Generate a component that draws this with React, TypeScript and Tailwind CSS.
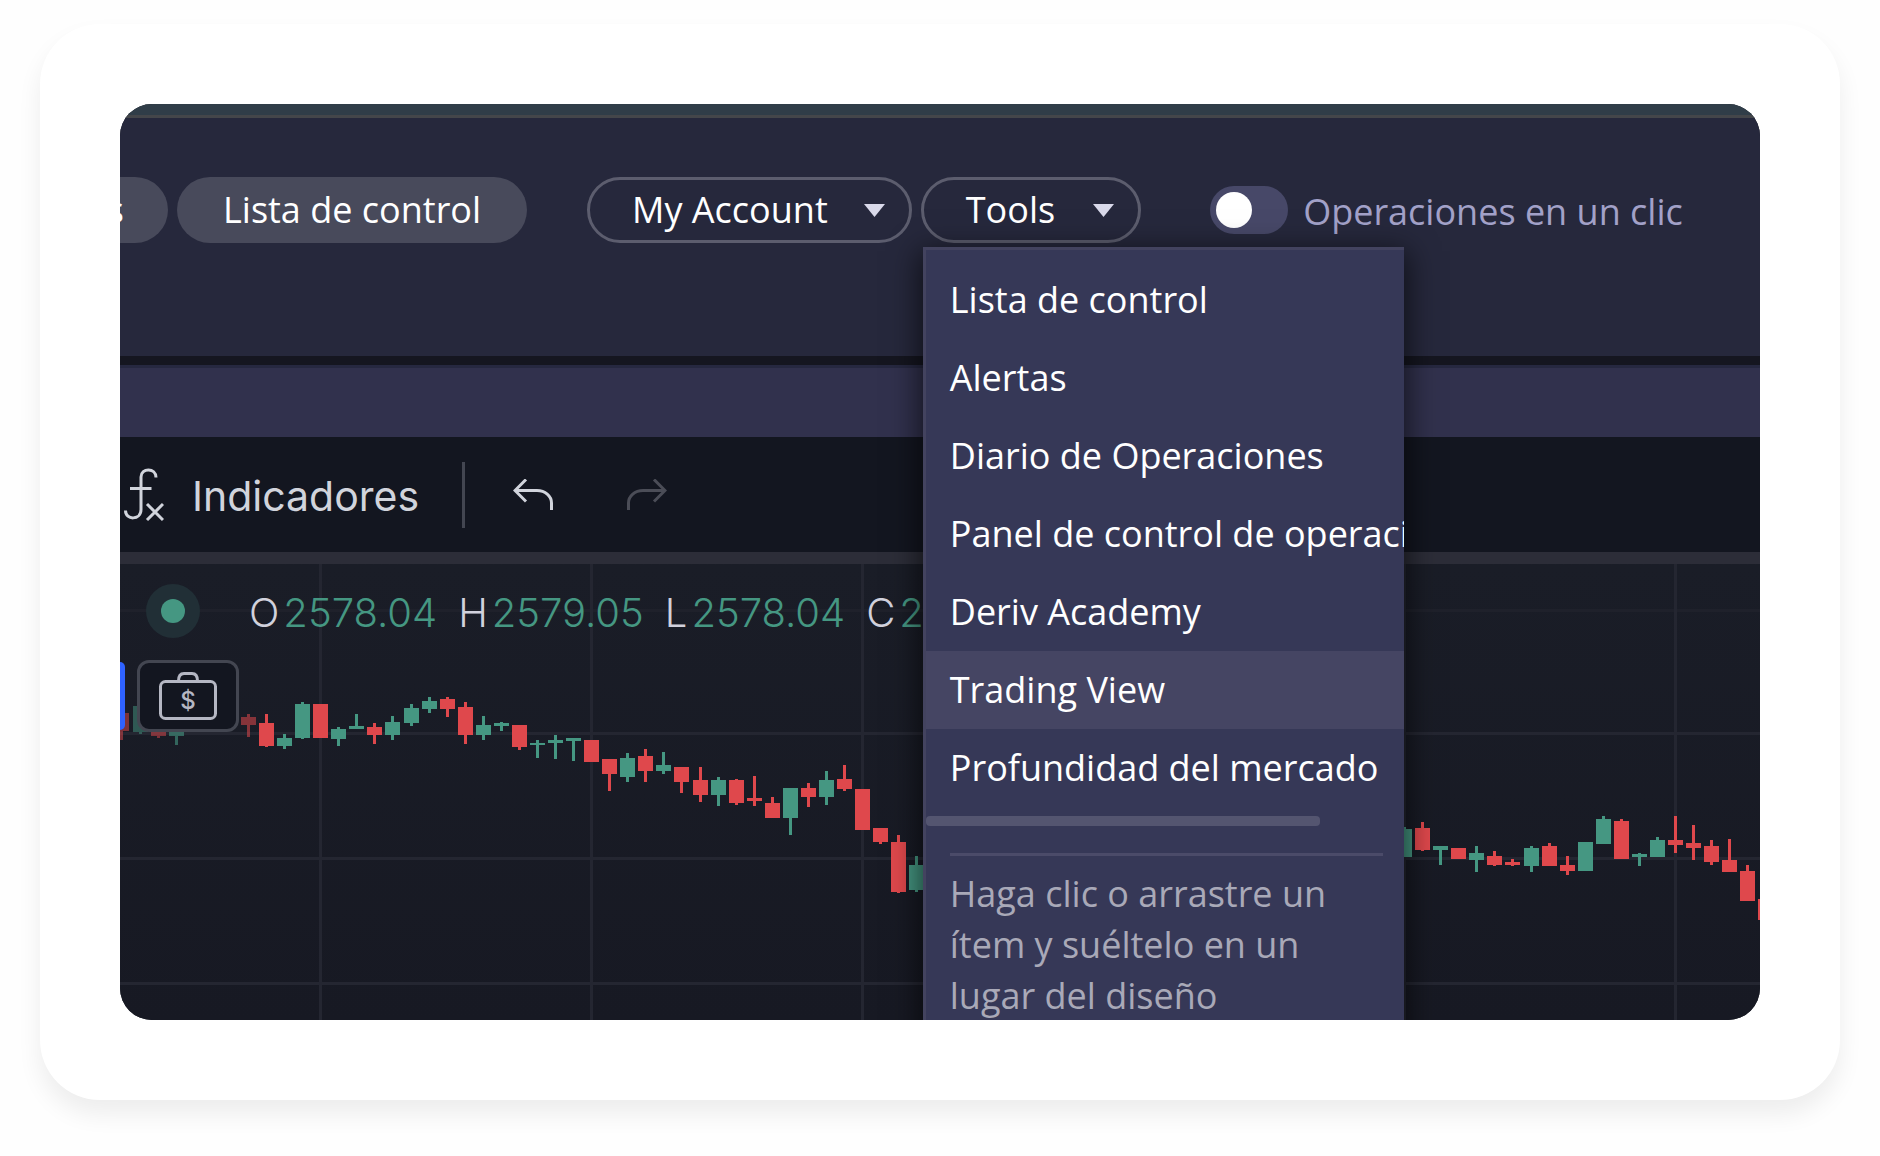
import React from "react";

type Candle = [number, "u" | "d", number, number, number, number, number?];

// index, direction, wick top, body top, body bottom, wick bottom, opacity
const candles: Candle[] = [
  [-8, "d", 713, 713, 731, 740, 0.5],
  [-7, "u", 706, 706, 732, 734, 0.5],
  [-6, "d", 717, 717, 736, 738, 0.5],
  [-5, "u", 717, 717, 736, 745, 0.6],
  [-1, "d", 714, 717, 725, 737, 0.55],
  [0, "d", 714, 723, 746, 747],
  [1, "u", 734, 738, 746, 749],
  [2, "u", 702, 704, 738, 739],
  [3, "d", 704, 704, 738, 738],
  [4, "u", 727, 729, 739, 746],
  [5, "u", 714, 726, 729, 729],
  [6, "d", 723, 727, 735, 744],
  [7, "u", 716, 722, 735, 740],
  [8, "u", 704, 708, 723, 726],
  [9, "u", 697, 701, 709, 713],
  [10, "d", 697, 699, 709, 717],
  [11, "d", 702, 707, 735, 744],
  [12, "u", 716, 725, 735, 740],
  [13, "u", 722, 723, 726, 731],
  [14, "d", 725, 725, 747, 750],
  [15, "u", 740, 743, 745, 758],
  [16, "u", 735, 740, 743, 759],
  [17, "u", 738, 738, 741, 761],
  [18, "d", 740, 740, 762, 762],
  [19, "d", 759, 759, 774, 791],
  [20, "u", 753, 758, 777, 782],
  [21, "d", 749, 756, 771, 782],
  [22, "u", 752, 765, 771, 774],
  [23, "d", 767, 767, 782, 793],
  [24, "d", 767, 780, 795, 802],
  [25, "u", 777, 780, 795, 806],
  [26, "d", 779, 780, 803, 805],
  [27, "d", 776, 798, 801, 806],
  [28, "d", 797, 803, 818, 818],
  [29, "u", 788, 788, 818, 835],
  [30, "d", 783, 788, 797, 807],
  [31, "u", 771, 780, 797, 805],
  [32, "d", 765, 779, 789, 791],
  [33, "d", 789, 789, 830, 830],
  [34, "d", 828, 828, 842, 844],
  [35, "d", 835, 842, 892, 893],
  [36, "u", 856, 865, 890, 892],
  [63, "u", 827, 829, 857, 857],
  [64, "d", 822, 828, 850, 851],
  [65, "u", 846, 846, 850, 865],
  [66, "d", 848, 848, 859, 859],
  [67, "u", 846, 853, 860, 872],
  [68, "d", 851, 856, 865, 866],
  [69, "d", 859, 862, 865, 866],
  [70, "u", 846, 848, 866, 872],
  [71, "d", 843, 846, 866, 866],
  [72, "d", 856, 865, 871, 875],
  [73, "u", 842, 842, 871, 871],
  [74, "u", 816, 819, 844, 844],
  [75, "d", 819, 821, 859, 859],
  [76, "u", 853, 854, 857, 866],
  [77, "u", 837, 840, 857, 857],
  [78, "d", 816, 840, 845, 853],
  [79, "d", 825, 843, 848, 860],
  [80, "d", 840, 846, 862, 865],
  [81, "d", 839, 860, 872, 872],
  [82, "d", 865, 871, 901, 901],
  [83, "d", 899, 899, 920, 920],
];

const verticals = [319, 590, 861, 1132, 1403, 1674];
const horizontals = [609, 732, 857, 982];

function Chart() {
  return (
    <svg aria-hidden="true" className="absolute inset-0 h-full w-full" shapeRendering="crispEdges">
      <g transform="translate(-120 -564)">
        {horizontals.map((y, i) => (
          <rect key={y} x="120" y={y} width="100%" height="3" fill={i === 0 ? "#1f212b" : "#242631"} />
        ))}
        {verticals.map((x) => (
          <rect key={x} x={x} y="564" width="3" height="100%" fill="#242631" />
        ))}
        {candles.map(([n, dir, wt, bt, bb, wb, o]) => {
          const cx = Math.round(266 + n * 18.065);
          return (
            <g key={n} fill={dir === "u" ? "#459782" : "#df484c"} opacity={o ?? 1}>
              <rect x={cx - 1} y={wt} width="3" height={wb - wt} />
              <rect x={cx - 7} y={bt} width="15" height={bb - bt} />
            </g>
          );
        })}
      </g>
    </svg>
  );
}

function Caret() {
  return (
    <svg aria-hidden="true" className="h-[13px] w-[21px]" viewBox="0 0 21 13">
      <path d="M0 0H21L10.5 13Z" fill="#d9d9ea" />
    </svg>
  );
}

function FxIcon() {
  return (
    <svg aria-hidden="true" className="h-[54px] w-[42px]" viewBox="0 0 42 54" fill="none" stroke="#d1d4dc" strokeWidth="3">
      <path d="M34 9.500C34 -0.500 19 -0.500 19 9V41.500C19 52.500 3.500 52.500 3.500 42.500" />
      <path d="M8 20.500H29.500M25 36L41 52M41 36L25 52" />
    </svg>
  );
}

function TurnArrow() {
  return (
    <svg aria-hidden="true" className="h-8 w-10" viewBox="0 0 40 32" fill="none" stroke="currentColor" strokeWidth="3">
      <path d="M13 0.500L2 11.500L13 22.500M2 11.500H24C32 11.500 38.500 17 38.500 24V31" />
    </svg>
  );
}

function BriefcaseIcon() {
  return (
    <svg aria-hidden="true" className="h-12 w-[58px]" viewBox="0 0 58 48" fill="none" stroke="#b5b7c3" strokeWidth="3">
      <rect x="1.500" y="9.500" width="55" height="37" rx="5" />
      <path d="M19.500 9C19.500 4 21 1.500 25 1.500H33C37 1.500 38.500 4 38.500 9" />
      <text x="29" y="37" textAnchor="middle" fill="#b5b7c3" stroke="none" className="font-[Inter] text-[24px] font-medium">
        $
      </text>
    </svg>
  );
}

const tools = [
  "Lista de control",
  "Alertas",
  "Diario de Operaciones",
  "Panel de control de operaciones",
  "Deriv Academy",
  "Trading View",
  "Profundidad del mercado",
];

function ToolsMenu() {
  return (
    <div className="absolute top-[70px] left-0.5 z-20 w-[481px] border-t-[3px] border-l-[3px] border-[#43435f] bg-[#363857] pt-[11px] pb-10 shadow-[0_8px_28px_4px_rgba(0,0,0,0.6)]">
      <ul className="overflow-hidden">
        {tools.map((t) => (
          <li key={t}>
            <button
              type="button"
              className={
                "block h-[78px] w-full overflow-hidden pl-6 text-left whitespace-nowrap text-white " +
                (t === "Trading View" ? "bg-[#454563]" : "")
              }
            >
              {t}
            </button>
          </li>
        ))}
      </ul>
      <div className="mt-[9px] h-[10px] w-[394px] rounded bg-[#545570]" />
      <hr className="mt-[27px] mr-[21px] ml-6 border-0 border-t-[3px] border-[#4b4b69]" />
      <p className="mt-3 px-6 leading-[51px] text-[#a9a9b8]">
        Haga clic o arrastre un ítem y suéltelo en un lugar del diseño
      </p>
    </div>
  );
}

function Quote({ label, value }: { label: string; value: string }) {
  return (
    <span className="flex gap-1">
      <span className="text-[#d1d1dc]">{label}</span>
      <span className="text-[#459782]">{value}</span>
    </span>
  );
}

export default function App() {
  return (
    <div className="min-h-screen bg-[#fefefe] px-10 pt-6 pb-14">
      <main className="rounded-[60px] bg-white p-20 shadow-[0_14px_24px_rgba(0,0,0,0.07)]">
        <div className="overflow-hidden rounded-[32px] bg-[#131620] font-['Open_Sans',sans-serif] text-[36px]">
          <div className="h-[14px] border-b-[3px] border-[#44464a] bg-[#303d48]" />
          <header className="flex h-[238px] items-start bg-[#26283c] pt-[59px] text-white">
            <button type="button" className="flex h-[66px] w-12 items-center justify-end overflow-hidden rounded-r-full bg-[#484a5b] pr-11">
              s
            </button>
            <button type="button" className="ml-[9px] h-[66px] rounded-full bg-[#484a5b] px-[46px] whitespace-nowrap">
              Lista de control
            </button>
            <button type="button" className="ml-[60px] flex h-[66px] items-center gap-9 rounded-full border-[3px] border-[#5c5d6e] pr-6 pl-[42px] whitespace-nowrap">
              My Account
              <Caret />
            </button>
            <div className="relative ml-[9px]">
              <button type="button" aria-haspopup="menu" aria-expanded="true" className="flex h-[66px] items-center gap-[38px] rounded-full border-[3px] border-[#5c5d6e] pr-6 pl-[42px]">
                Tools
                <Caret />
              </button>
              <ToolsMenu />
            </div>
            <label className="ml-[69px] flex h-[66px] items-center gap-[15px] whitespace-nowrap text-[#a2a1c8]">
              <input
                type="checkbox"
                role="switch"
                className="h-12 w-[78px] appearance-none rounded-full bg-[#474868] p-1.5 before:block before:size-9 before:rounded-full before:bg-white checked:before:ml-[30px]"
              />
              <span className="pt-[3px]">Operaciones en un clic</span>
            </label>
          </header>
          <div className="h-3 border-b-[3px] border-[#262840] bg-[#151620]" />
          <div className="h-[69px] bg-[#31314d]" />
          <div className="flex h-[115px] items-center bg-[#131620] text-[#d1d4dc]">
            <button type="button" className="flex items-center gap-7 pl-0.5 font-[Inter] text-[41px]">
              <FxIcon />
              <span className="pt-1">Indicadores</span>
            </button>
            <span className="ml-[43px] h-[66px] w-[3px] bg-[#434651]" />
            <button type="button" aria-label="Deshacer" className="ml-12">
              <TurnArrow />
            </button>
            <button type="button" aria-label="Rehacer" disabled className="ml-[74px] -scale-x-100 text-[#4b4d57]">
              <TurnArrow />
            </button>
          </div>
          <div className="h-3 bg-[#2c2d38]" />
          <section className="relative h-[456px] bg-linear-to-b from-[#1a1d27] to-[#171923]">
            <Chart />
            <div className="relative flex items-center gap-[49px] pt-5 pl-[26px]">
              <span className="flex size-[54px] items-center justify-center rounded-full bg-[#212f36]">
                <span className="size-6 rounded-full bg-[#459782]" />
              </span>
              <div className="flex h-[54px] gap-[21px] font-[Inter] text-[40px] leading-[58px] font-light">
                <Quote label="O" value="2578.04" />
                <Quote label="H" value="2579.05" />
                <Quote label="L" value="2578.04" />
                <Quote label="C" value="2" />
              </div>
            </div>
            <div className="relative mt-[22px] flex items-center gap-3">
              <button type="button" aria-label="Comprar" className="h-[68px] w-[5px] rounded-r-[5px] bg-[#2f62ff]" />
              <button type="button" aria-label="Operar" className="flex h-[72px] w-[102px] items-center justify-center rounded-xl border-[3px] border-[#434651] bg-[#131620]">
                <BriefcaseIcon />
              </button>
            </div>
          </section>
        </div>
      </main>
    </div>
  );
}
